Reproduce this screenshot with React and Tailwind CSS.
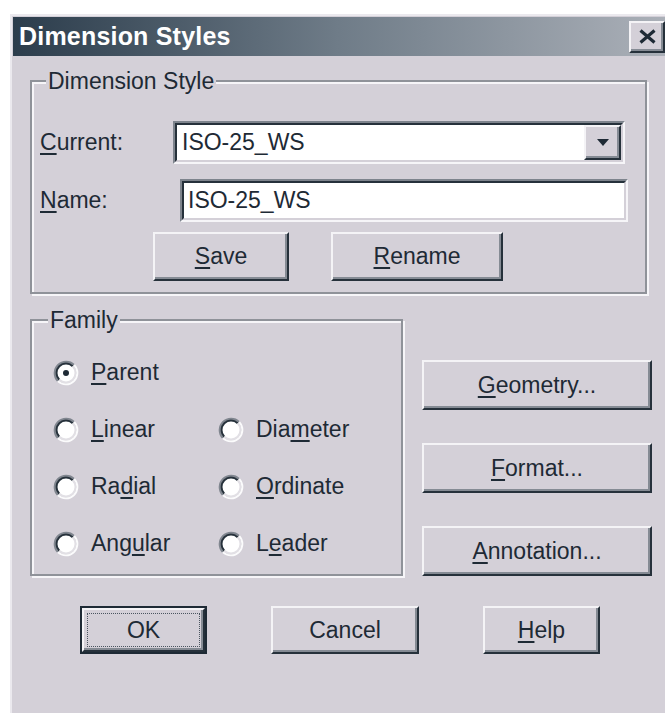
import React from "react";

// classic 3D bevels
const raised =
  "bg-[#d4d0d8] border-2 border-t-[#f4f3f6] border-l-[#f4f3f6] border-r-[#26313b] border-b-[#26313b] shadow-[inset_-2px_-2px_0_#858b94]";
const etched =
  "border-2 border-[#8f9299] shadow-[inset_2px_2px_0_#f6f5f8,2px_2px_0_#f6f5f8]";

const Key = ({ children }) => (
  <span className="underline decoration-[1.5px] underline-offset-[3px]">{children}</span>
);

const Button = ({ className = "", children }) => (
  <button type="button" className={`${raised} flex items-center justify-center ${className}`}>
    {children}
  </button>
);

const Sunken = ({ className = "", children }) => (
  <div
    className={`border-2 border-t-[#7e848d] border-l-[#7e848d] border-r-[#f6f5f8] border-b-[#f6f5f8] ${className}`}
  >
    <div className="h-full flex border-2 border-t-[#26313b] border-l-[#26313b] border-r-[#d4d0d8] border-b-[#d4d0d8] bg-white">
      {children}
    </div>
  </div>
);

const Radio = ({ checked }) => (
  <svg width="26" height="26" viewBox="0 0 26 26" className="shrink-0">
    <circle cx="13" cy="13" r="10" fill="#fff" />
    <path d="M4.87 21.13 A11.5 11.5 0 0 1 21.13 4.87" stroke="#80868f" strokeWidth="2" fill="none" />
    <path d="M21.13 4.87 A11.5 11.5 0 0 1 4.87 21.13" stroke="#fbfbfc" strokeWidth="2" fill="none" />
    <path d="M6.28 19.72 A9.5 9.5 0 0 1 19.72 6.28" stroke="#26313b" strokeWidth="2" fill="none" />
    <path d="M19.72 6.28 A9.5 9.5 0 0 1 6.28 19.72" stroke="#e2e0e5" strokeWidth="2" fill="none" />
    {checked && <circle cx="13" cy="13" r="3" fill="#1e2a35" />}
  </svg>
);

const Option = ({ checked, children }) => (
  <label className="flex items-center gap-[12px]">
    <Radio checked={checked} />
    <span>{children}</span>
  </label>
);

export default function App() {
  return (
    <div className="w-[665px] h-[713px] overflow-hidden bg-white pl-[10px] pt-[14px] font-['Liberation_Sans',Arial,sans-serif] text-[23px] text-[#1e2a35]">
      <div className="h-full flex flex-col bg-[#d4d0d8] border-l-2 border-t-2 border-[#ebe9ee] pl-[1px] pt-[1px]">
        {/* title bar */}
        <div className="h-[39px] flex items-center justify-between bg-gradient-to-r from-[#2c3d4c] via-[#6f7c88] to-[#abb0b8]">
          <span className="pl-[6px] text-[25px] font-bold text-white tracking-[0.2px]">Dimension Styles</span>
          <button type="button" className={`${raised} w-[36px] h-[32px] flex items-center justify-center`}>
            <svg width="19" height="15" viewBox="0 0 19 15">
              <path d="M2.5 1.5 L16.5 13.5 M16.5 1.5 L2.5 13.5" stroke="#1e2a35" strokeWidth="3.2" />
            </svg>
          </button>
        </div>

        <div className="pl-[17px] flex flex-col">
          {/* Dimension Style group */}
          <fieldset className={`${etched} w-[617px] mt-[12px] pb-[11px]`}>
            <legend className="ml-[14px] px-[2px] leading-[26px] bg-[#d4d0d8]">Dimension Style</legend>
            <div className="pl-[8px] pt-[27px]">
              <div className="flex items-center h-[43px]">
                <span className="w-[133px]">
                  <Key>C</Key>urrent:
                </span>
                <Sunken className="w-[452px] h-[43px]">
                  <div className="flex-1 flex items-center pl-[5px]">ISO-25_WS</div>
                  <div className={`${raised} w-[37px] h-full flex items-center justify-center`}>
                    <svg width="14" height="8" viewBox="0 0 14 8">
                      <path d="M1 0 H13 L7 7 Z" fill="#1e2a35" />
                    </svg>
                  </div>
                </Sunken>
              </div>
              <div className="flex items-center h-[43px] mt-[15px]">
                <span className="w-[140px]">
                  <Key>N</Key>ame:
                </span>
                <Sunken className="w-[448px] h-[43px]">
                  <div className="flex-1 flex items-center pl-[4px]">ISO-25_WS</div>
                </Sunken>
              </div>
              <div className="flex mt-[10px] ml-[113px] gap-[42px]">
                <Button className="w-[136px] h-[49px]">
                  <Key>S</Key>ave
                </Button>
                <Button className="w-[172px] h-[49px]">
                  <Key>R</Key>ename
                </Button>
              </div>
            </div>
          </fieldset>

          <div className="flex mt-[13px]">
            {/* Family group */}
            <fieldset className={`${etched} w-[373px] h-[269px]`}>
              <legend className="ml-[16px] px-[2px] leading-[26px] bg-[#d4d0d8]">Family</legend>
              <div className="pl-[21px] pt-[11px] grid grid-cols-[165px_1fr] auto-rows-[57px]">
                <Option checked>
                  <Key>P</Key>arent
                </Option>
                <div />
                <Option>
                  <Key>L</Key>inear
                </Option>
                <Option>
                  Dia<Key>m</Key>eter
                </Option>
                <Option>
                  Ra<Key>d</Key>ial
                </Option>
                <Option>
                  <Key>O</Key>rdinate
                </Option>
                <Option>
                  Ang<Key>u</Key>lar
                </Option>
                <Option>
                  L<Key>e</Key>ader
                </Option>
              </div>
            </fieldset>

            <div className="ml-[19px] pt-[53px] flex flex-col gap-[33px]">
              <Button className="w-[230px] h-[50px]">
                <Key>G</Key>eometry...
              </Button>
              <Button className="w-[230px] h-[50px]">
                <Key>F</Key>ormat...
              </Button>
              <Button className="w-[230px] h-[50px]">
                <Key>A</Key>nnotation...
              </Button>
            </div>
          </div>

          {/* dialog buttons */}
          <div className="flex mt-[30px] ml-[50px] gap-[64px]">
            <div className="w-[127px] h-[48px] border-2 border-[#1e2a35]">
              <Button className="w-full h-full p-[3px]">
                <span className="w-full h-full flex items-center justify-center border-[1.5px] border-dotted border-[#4a5560]">
                  OK
                </span>
              </Button>
            </div>
            <Button className="w-[148px] h-[48px]">Cancel</Button>
            <Button className="w-[117px] h-[48px]">
              <Key>H</Key>elp
            </Button>
          </div>
        </div>
      </div>
    </div>
  );
}
